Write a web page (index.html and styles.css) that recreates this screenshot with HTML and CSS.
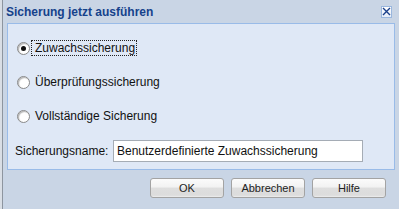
FILE: index.html
```html
<!DOCTYPE html>
<html>
<head>
<meta charset="utf-8">
<link rel="stylesheet" href="styles.css">
</head>
<body>
<div class="window">
  <div class="titlebar">
    <span class="title">Sicherung jetzt ausführen</span>
    <span class="close"><svg width="9" height="9" viewBox="0 0 9 9"><path d="M1 1L8 8M8 1L1 8" stroke="#1a3f8a" stroke-width="1.4"/></svg></span>
  </div>
  <div class="panel">
    <div class="options">
      <label class="option">
        <span class="radio checked"></span>
        <span class="text focus">Zuwachssicherung</span>
      </label>
      <label class="option">
        <span class="radio"></span>
        <span class="text">Überprüfungssicherung</span>
      </label>
      <label class="option">
        <span class="radio"></span>
        <span class="text">Vollständige Sicherung</span>
      </label>
    </div>
    <div class="field">
      <span class="field-label">Sicherungsname:</span>
      <span class="input">Benutzerdefinierte Zuwachssicherung</span>
    </div>
  </div>
  <div class="buttons">
    <span class="btn">OK</span>
    <span class="btn">Abbrechen</span>
    <span class="btn">Hilfe</span>
  </div>
</div>
</body>
</html>
```
FILE: styles.css
```css
html, body {
  margin: 0;
  padding: 0;
}
body {
  width: 399px;
  height: 209px;
  overflow: hidden;
  font-family: "Liberation Sans", Arial, sans-serif;
  font-size: 12px;
  color: #111;
}
.window {
  width: 399px;
  height: 209px;
  background: #c9d5e5;
  box-sizing: border-box;
  box-shadow: inset 2px 0 #d9dee5, inset 3px 0 #8d959f;
}
.titlebar {
  height: 23px;
  display: flex;
  align-items: center;
  justify-content: space-between;
  padding: 0 7px 0 6px;
}
.title {
  font-weight: bold;
  font-size: 12px;
  color: #15428b;
  line-height: 14px;
}
.close {
  width: 11px;
  height: 12px;
  box-sizing: border-box;
  border: 1px solid #9ab7de;
  background: linear-gradient(#ffffff, #e4ecf8);
  display: flex;
  align-items: center;
  justify-content: center;
}
.close svg {
  display: block;
}
.panel {
  margin: 0 4px 0 7px;
  height: 147px;
  box-sizing: border-box;
  border: 1px solid #99bbe8;
  background: #dfe8f6;
  padding: 16px 0 0 7px;
}
.options {
  display: flex;
  flex-direction: column;
  gap: 18px;
  margin-left: 2px;
}
.option {
  display: flex;
  align-items: center;
  height: 16px;
}
.radio {
  width: 13px;
  height: 13px;
  box-sizing: border-box;
  border-radius: 50%;
  border: 1px solid #8a8a8a;
  background: radial-gradient(circle at 60% 60%, #ffffff 45%, #e6e6e6 100%);
  box-shadow: inset 1px 1px 1px #b5b5b5;
  position: relative;
  margin-right: 1px;
}
.radio.checked::after {
  content: "";
  position: absolute;
  left: 3px;
  top: 3px;
  width: 5px;
  height: 5px;
  border-radius: 50%;
  background: #111;
}
.text {
  height: 16px;
  line-height: 15px;
  box-sizing: border-box;
  padding: 0 1px 0 3px;
  border: 1px solid transparent;
  white-space: nowrap;
}
.text.focus {
  border: 1px dotted #222;
}
.field {
  display: flex;
  align-items: center;
  margin-top: 16px;
}
.field-label {
  width: 98px;
}
.input {
  width: 250px;
  height: 22px;
  box-sizing: border-box;
  border: 1px solid #a5acb5;
  background: #fff;
  padding-left: 3px;
  line-height: 20px;
  white-space: nowrap;
}
.buttons {
  display: flex;
  justify-content: flex-end;
  gap: 7px;
  padding-right: 13px;
  margin-top: 8px;
}
.btn {
  width: 74px;
  height: 20px;
  box-sizing: border-box;
  border: 1px solid #a3a3a3;
  border-radius: 3px;
  background: linear-gradient(#fbfbfb 0%, #f2f2f2 45%, #dedede 50%, #dcdcdc 90%, #eeeeee 100%);
  font-size: 11px;
  line-height: 18px;
  text-align: center;
  color: #222;
}
```
